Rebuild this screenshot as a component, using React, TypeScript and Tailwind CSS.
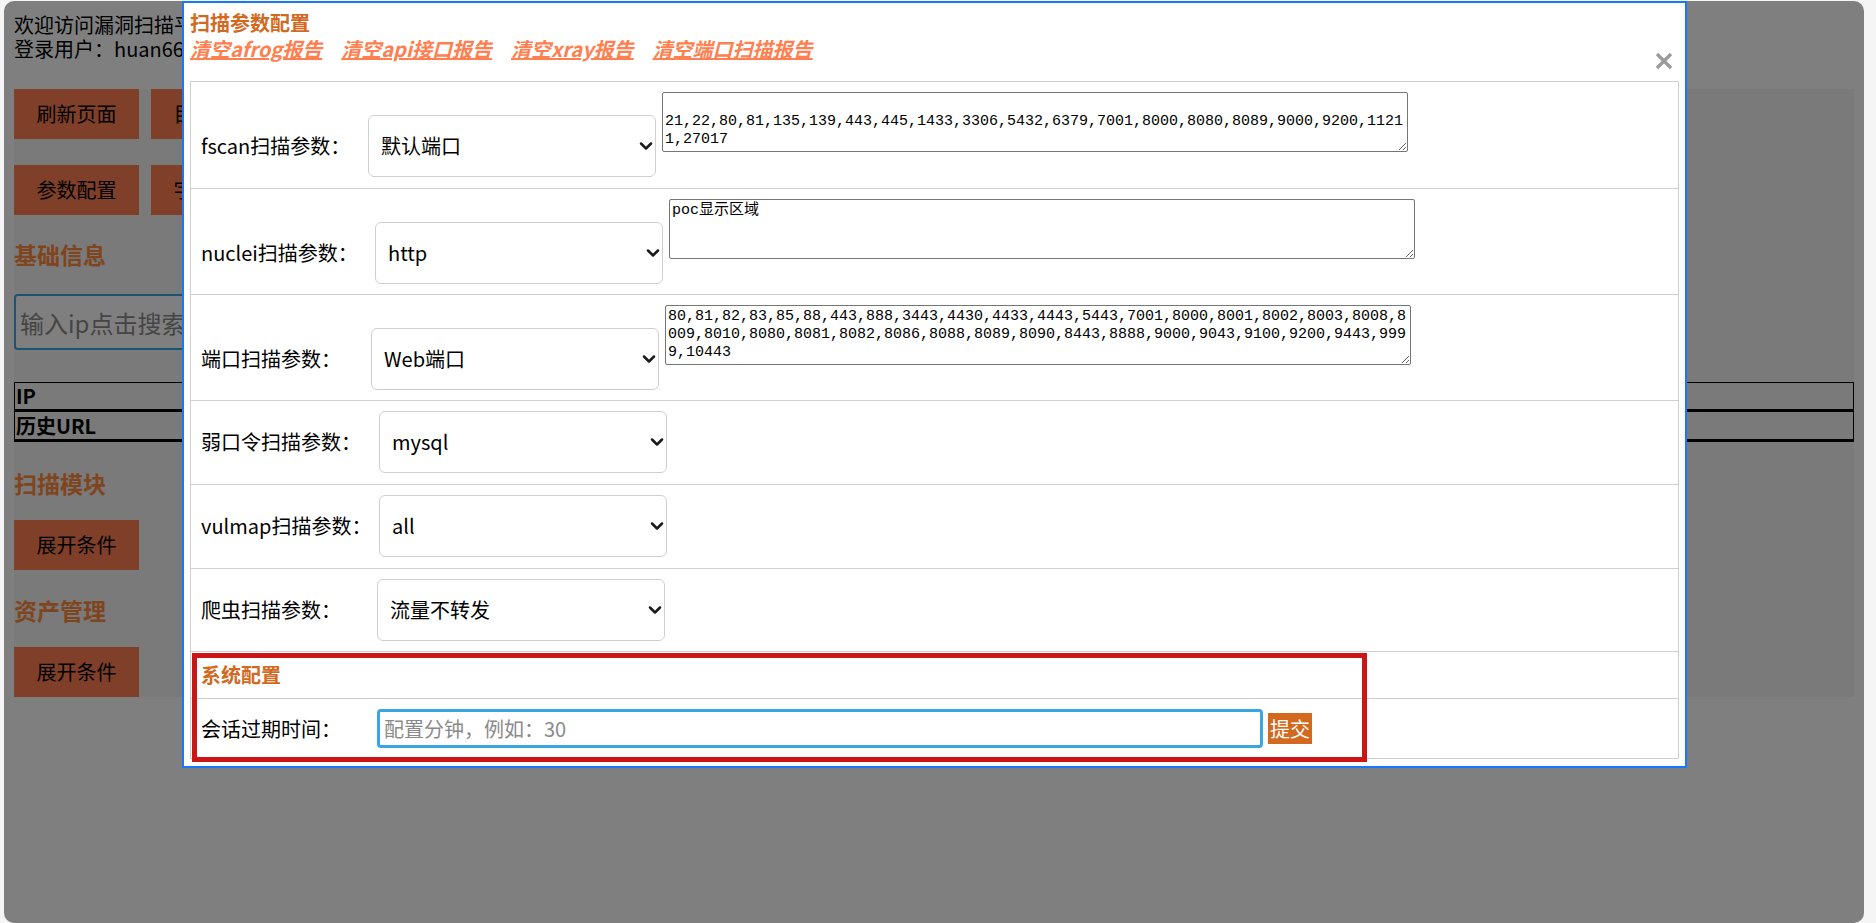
import React from "react";
import clsx from "clsx";
import { ChevronDown } from "lucide-react";

interface ParamRow {
  label: string;
  labelWidth: string;
  padBottom: string;
  options: string[];
  text?: string;
}

const FSCAN_PORTS =
  "\n21,22,80,81,135,139,443,445,1433,3306,5432,6379,7001,8000,8080,8089,9000,9200,11211,27017";
const WEB_PORTS =
  "80,81,82,83,85,88,443,888,3443,4430,4433,4443,5443,7001,8000,8001,8002,8003,8008,8009,8010,8080,8081,8082,8086,8088,8089,8090,8443,8888,9000,9043,9100,9200,9443,9999,10443";

const paramRows: ParamRow[] = [
  {
    label: "fscan扫描参数：",
    labelWidth: "w-[167px]",
    padBottom: "pb-[11px]",
    options: ["默认端口", "全部端口", "自定义端口"],
    text: FSCAN_PORTS,
  },
  {
    label: "nuclei扫描参数：",
    labelWidth: "w-[174px]",
    padBottom: "pb-[10px]",
    options: ["http", "dns", "network", "file"],
    text: "poc显示区域",
  },
  {
    label: "端口扫描参数：",
    labelWidth: "w-[170px]",
    padBottom: "pb-[10px]",
    options: ["Web端口", "默认端口", "全部端口"],
    text: WEB_PORTS,
  },
  {
    label: "弱口令扫描参数：",
    labelWidth: "w-[178px]",
    padBottom: "pb-[11px]",
    options: ["mysql", "ssh", "ftp", "redis", "mssql"],
  },
  {
    label: "vulmap扫描参数：",
    labelWidth: "w-[178px]",
    padBottom: "pb-[11px]",
    options: ["all", "weblogic", "struts2", "tomcat"],
  },
  {
    label: "爬虫扫描参数：",
    labelWidth: "w-[176px]",
    padBottom: "pb-[10px]",
    options: ["流量不转发", "流量转发到xray"],
  },
];

const clearLinks = ["清空afrog报告", "清空api接口报告", "清空xray报告", "清空端口扫描报告"];

const SelectBox = ({ options }: { options: string[] }) => (
  <div className="relative shrink-0">
    <select
      defaultValue={options[0]}
      className="h-[62px] w-[288px] appearance-none rounded-[6px] border border-[#cfcfcf] bg-white pl-[12px] pr-[28px] text-[20px] text-black outline-none"
    >
      {options.map((o) => (
        <option key={o}>{o}</option>
      ))}
    </select>
    <ChevronDown
      size={20}
      strokeWidth={3}
      className="pointer-events-none absolute right-0 top-1/2 -translate-y-1/2 text-[#1a1a1a]"
    />
  </div>
);

const PageButton = ({ label }: { label: string }) => (
  <button className="h-[50px] w-[125px] shrink-0 bg-[#ff7f50] text-[20px] text-black">
    {label}
  </button>
);

const Heading = ({ children, className }: { children: React.ReactNode; className: string }) => (
  <h3 className={clsx("h-[28px] text-[23px] font-bold leading-[28px] text-[#ff8a3c]", className)}>
    {children}
  </h3>
);

const ConfigModal = () => (
  <div className="absolute left-[178px] top-0 h-[767px] w-[1505px] border-2 border-[#1677ff] bg-white px-[6px] pt-[7px]">
    <h3 className="text-[20px] font-bold leading-[26px] text-[#d2691e]">扫描参数配置</h3>
    <div className="flex gap-[19px] text-[20px] font-bold italic leading-[26px] text-[#ff7f50]">
      {clearLinks.map((l) => (
        <a key={l} href="#" className="underline">
          {l}
        </a>
      ))}
    </div>

    <button className="absolute right-[12px] top-[49px]">
      <svg width="18" height="18" viewBox="0 0 18 18">
        <path d="M2 2 L16 16 M16 2 L2 16" stroke="#9a9a9a" strokeWidth="3.2" />
      </svg>
    </button>

    <div className="mt-[19px] border border-[#cfcfcf]">
      {paramRows.map((row) => (
        <div
          key={row.label}
          className={clsx(
            "flex items-start border-t border-[#cfcfcf] pl-[10px] pt-[10px] first:border-t-0",
            row.padBottom
          )}
        >
          <div className={clsx("flex items-center", row.text !== undefined && "mt-[23px]")}>
            <span className={clsx("shrink-0 text-[20px] leading-[26px] text-black", row.labelWidth)}>
              {row.label}
            </span>
            <SelectBox options={row.options} />
          </div>
          {row.text !== undefined && (
            <textarea
              rows={3}
              defaultValue={row.text}
              className="ml-[6px] h-[60px] w-[746px] rounded-[2px] border border-[#767676] p-[2px] text-[15px] leading-[18px] text-black outline-none [font-family:'Liberation_Mono','Noto_Sans_CJK_SC',monospace]"
            />
          )}
        </div>
      ))}

      <div className="border-t border-[#cfcfcf] pl-[10px] py-[10px]">
        <h4 className="text-[20px] font-bold leading-[26px] text-[#d2691e]">系统配置</h4>
      </div>
      <div className="flex items-center border-t border-[#cfcfcf] pl-[10px] py-[10px]">
        <span className="w-[176px] shrink-0 text-[20px] leading-[26px] text-black">会话过期时间：</span>
        <input
          placeholder="配置分钟，例如：30"
          className="h-[39px] w-[886px] rounded-[4px] border-[3px] border-[#3aa5e3] pl-[4px] text-[20px] text-black outline-none placeholder:text-[#8a8a8a]"
        />
        <button className="ml-[5px] h-[31px] w-[44px] bg-[#d2691e] text-[20px] leading-[31px] text-white">
          提交
        </button>
      </div>
    </div>

    <div className="pointer-events-none absolute left-[8px] top-[650px] h-[109px] w-[1175px] border-[5px] border-[#cc1616]" />
  </div>
);

export default function App() {
  return (
    <div className="h-[923px] overflow-hidden bg-[#f5f5f5] pl-[4px] pt-[1px] [font-family:'Noto_Sans_CJK_SC','Noto_Sans',sans-serif]">
      <div className="relative h-[922px] w-[1860px] overflow-hidden rounded-[10px] bg-white">
        <div className="px-[10px] pt-[12px]">
          <p className="text-[20px] leading-[24px] text-black">欢迎访问漏洞扫描平台</p>
          <p className="text-[20px] leading-[24px] text-black">登录用户：huan666</p>

          <section className="mt-[28px] h-[608px] bg-[#f4f4f4]">
            <div className="flex gap-[12px]">
              <PageButton label="刷新页面" />
              <PageButton label="目录扫描" />
              <PageButton label="资产扫描" />
              <PageButton label="漏洞扫描" />
            </div>
            <div className="mt-[26px] flex gap-[12px]">
              <PageButton label="参数配置" />
              <PageButton label="字典管理" />
              <PageButton label="日志管理" />
            </div>

            <Heading className="mt-[25px]">基础信息</Heading>
            <input
              placeholder="输入ip点击搜索"
              className="mt-[26px] h-[56px] w-[600px] rounded-[4px] border-2 border-[#3aa5e3] bg-white pl-[4px] text-[24px] outline-none placeholder:text-[#8a8a8a]"
            />

            <div className="mt-[32px] border-x border-t border-black text-[20px] font-bold text-black">
              <div className="h-[29px] border-b-[3px] border-black pl-[1px] leading-[26px]">IP</div>
              <div className="h-[30px] border-b-[3px] border-black pl-[1px] leading-[27px]">历史URL</div>
            </div>

            <Heading className="mt-[27px]">扫描模块</Heading>
            <div className="mt-[23px]">
              <PageButton label="展开条件" />
            </div>

            <Heading className="mt-[26px]">资产管理</Heading>
            <div className="mt-[23px]">
              <PageButton label="展开条件" />
            </div>
          </section>
        </div>

        <div className="absolute inset-0 bg-black/50">
          <ConfigModal />
        </div>
      </div>
    </div>
  );
}
